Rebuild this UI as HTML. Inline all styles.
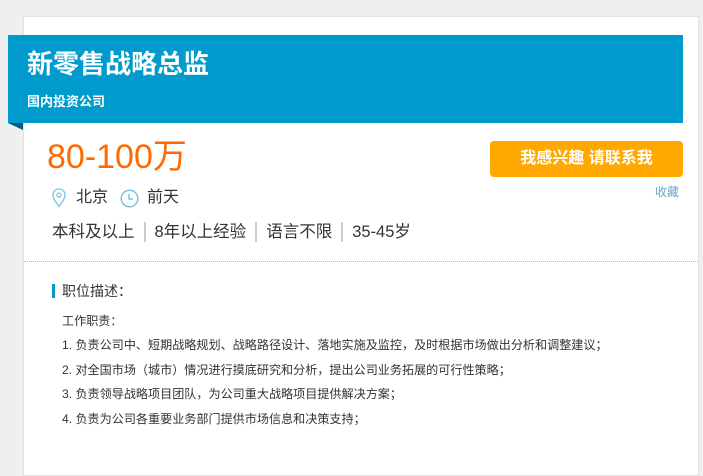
<!DOCTYPE html>
<html><head><meta charset="utf-8"><style>
*{margin:0;padding:0;box-sizing:border-box}
body{width:703px;height:457px;background:#efefef;font-family:"Liberation Sans","Noto Sans CJK SC",sans-serif;position:relative;overflow:hidden}
.card{position:absolute;left:23px;top:16px;width:676px;height:460px;background:#fff;border:1px solid #e2e2e2}
.banner{position:absolute;left:8px;top:35px;width:675px;height:88px;background:#009bcc}
.fold{position:absolute;left:8px;top:123px;width:0;height:0;border-top:7px solid #005d80;border-left:15px solid transparent}
.t1{position:absolute;left:27px;top:47px;color:#fff;font-size:26px;font-weight:bold;line-height:34px}
.t2{position:absolute;left:27px;top:93px;color:#fff;font-size:13px;font-weight:bold;line-height:18px}
.sal{position:absolute;left:47px;top:136px;color:#ff6a00;font-size:34px;line-height:42px}
.btn{position:absolute;left:490px;top:141px;width:193px;height:36px;background:#fea800;border-radius:4px;color:#fff;font-size:16px;font-weight:bold;text-align:center;line-height:36px}
.fav{position:absolute;left:655px;top:184px;font-size:12px;color:#6aa5c8;line-height:16px}
.loc{position:absolute;top:188px;font-size:16px;color:#333;line-height:20px}
.tags{position:absolute;left:52px;top:222px;font-size:16.5px;color:#333;line-height:20px;white-space:nowrap}
.tags span{display:inline-block}
.sep{width:2px;height:20px;background:#ccc;vertical-align:top;margin:0 9px}
.dots{position:absolute;left:24px;top:261px;width:674px;border-top:1px dotted #bbb}
.bar{position:absolute;left:52px;top:284px;width:3px;height:14px;background:#009bcc}
.h{position:absolute;left:62px;top:281px;font-size:14px;color:#333;line-height:20px}
.p{position:absolute;left:62px;font-size:12.1px;color:#333;line-height:16px;white-space:nowrap}
</style></head><body>
<div class="card"></div>
<div class="banner"></div><div class="fold"></div>
<div class="t1">新零售战略总监</div>
<div class="t2">国内投资公司</div>
<div class="sal">80-100万</div>
<div class="btn">我感兴趣 请联系我</div>
<div class="fav">收藏</div>
<svg style="position:absolute;left:51px;top:188px" width="16" height="20" viewBox="0 0 16 20"><path d="M8 18.5C4 13 2 10 2 7a6 6 0 0 1 12 0c0 3-2 6-6 11.5z" fill="none" stroke="#7cc4e2" stroke-width="1.3"/><circle cx="8" cy="7" r="2" fill="none" stroke="#7cc4e2" stroke-width="1.3"/></svg>
<div class="loc" style="left:76px">北京</div>
<svg style="position:absolute;left:120px;top:189px" width="19" height="19" viewBox="0 0 19 19"><circle cx="9.5" cy="9.5" r="8.3" fill="none" stroke="#7cc4e2" stroke-width="1.5"/><path d="M9 5v5h4" fill="none" stroke="#7cc4e2" stroke-width="1.5"/></svg>
<div class="loc" style="left:147px">前天</div>
<div class="tags"><span>本科及以上</span><span class="sep"></span><span>8年以上经验</span><span class="sep"></span><span>语言不限</span><span class="sep"></span><span>35-45岁</span></div>
<div class="dots"></div>
<div class="bar"></div>
<div class="h">职位描述：</div>
<div class="p" style="top:313px">工作职责：</div>
<div class="p" style="top:337px">1. 负责公司中、短期战略规划、战略路径设计、落地实施及监控，及时根据市场做出分析和调整建议；</div>
<div class="p" style="top:362px">2. 对全国市场（城市）情况进行摸底研究和分析，提出公司业务拓展的可行性策略；</div>
<div class="p" style="top:386px">3. 负责领导战略项目团队，为公司重大战略项目提供解决方案；</div>
<div class="p" style="top:411px">4. 负责为公司各重要业务部门提供市场信息和决策支持；</div>
</body></html>
